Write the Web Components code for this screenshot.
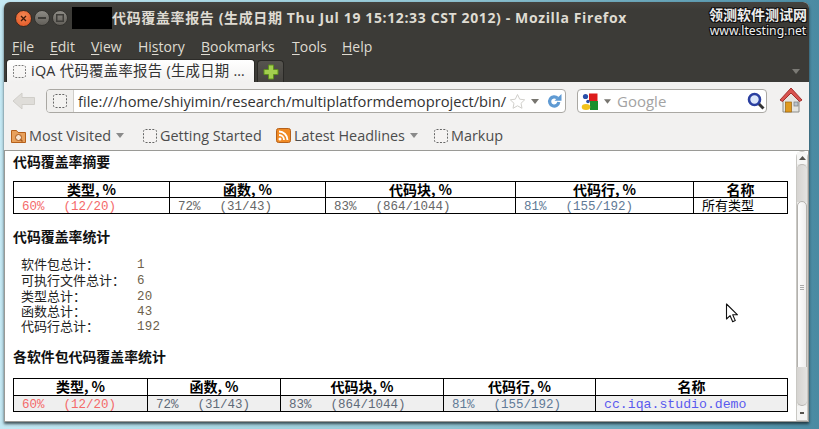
<!DOCTYPE html>
<html><head><meta charset="utf-8">
<style>html,body{margin:0;padding:0;width:819px;height:429px;overflow:hidden}</style>
</head><body>
<x-desktop>
  <x-window>
    <x-titlebar title="代码覆盖率报告 (生成日期 Thu Jul 19 15:12:33 CST 2012) - Mozilla Firefox"></x-titlebar>
    <x-menubar></x-menubar>
    <x-tabbar></x-tabbar>
    <x-navbar></x-navbar>
    <x-bookmarks></x-bookmarks>
    <x-viewport>
      <x-report></x-report>
      <x-scrollbar></x-scrollbar>
    </x-viewport>
  </x-window>
</x-desktop>
<script>
const UI = '"Open Sans","Noto Sans","Noto Sans CJK SC",sans-serif';
const CJK = '"Noto Sans CJK SC","Liberation Sans",sans-serif';
const dashed = (s=14)=>`<svg width="${s}" height="${s}" viewBox="0 0 14 14" style="display:block;flex:none"><rect x=".5" y=".5" width="13" height="13" rx="2" fill="#f6f5f4" fill-opacity=".6" stroke="#666" stroke-dasharray="2 1.4"/></svg>`;
const tri = (c='#8a8a8a',w=8,h=5)=>`<svg width="${w}" height="${h}" viewBox="0 0 8 5" style="display:block;flex:none"><path d="M0 0h8L4 5z" fill="${c}"/></svg>`;
function def(name, css, html){
  customElements.define(name, class extends HTMLElement{
    constructor(){super();const r=this.attachShadow({mode:'open'});
      r.innerHTML=`<style>${css}</style>`+(typeof html==='function'?html(this):html);}
    connectedCallback(){ if(typeof html==='function'){const r=this.shadowRoot;r.innerHTML=`<style>${css}</style>`+html(this);} }
  });
}
def('x-desktop',`:host{display:block;position:relative;width:819px;height:429px;overflow:hidden;box-sizing:border-box;padding:2px 10px 0 4px;
  background:linear-gradient(90deg,#c4e8f3 0,#b4dfea 15%,#8fc3d1 55%,#5a9ab0 90%,#4a8aa2 100%)}
  .wm{position:absolute;left:706px;top:5px;width:104px;text-align:center;color:#eee;font-weight:700;
    text-shadow:-1px 0 #111,1px 0 #111,0 -1px #111,0 1px #111,-1px -1px #111,1px 1px #111,1px -1px #111,-1px 1px #111}
  .a{font:700 14px/18px ${CJK};white-space:nowrap}
  .b{font:400 12.2px/14px "Noto Sans",sans-serif;margin-top:1px;white-space:nowrap}
  svg.c{position:absolute;left:725px;top:303px}`,
 `<slot></slot><div class="wm"><div class="a">领测软件测试网</div><div class="b">www.ltesting.net</div></div>
 <svg class="c" width="14" height="20" viewBox="0 0 14 20"><path d="M1.5 1v15l3.6-3.3 2.6 6 2.6-1.1-2.600-5.800h4.800z" fill="#fff" stroke="#111" stroke-width="1.1" stroke-linejoin="round"/></svg>`);
def('x-window',`:host{display:flex;flex-direction:column;width:805px;height:420px;border-radius:6px 6px 0 0;overflow:hidden;background:#f2f1f0;
  box-shadow:0 2px 3px rgba(20,30,35,.75)}`,`<slot></slot>`);
def('x-titlebar',`:host{display:flex;align-items:center;height:32px;background:#3c3b37;box-sizing:border-box;padding-left:11px;
   background:linear-gradient(#45433f,#3c3b37 8px)}
   .btn{width:16px;height:16px;border-radius:50%;margin-right:2px;flex:none;display:flex;align-items:center;justify-content:center;box-sizing:border-box}
   .x{width:17px;height:17px;background:radial-gradient(circle at 50% 35%,#f58a55,#e0501f);color:#4a2010;border:1px solid #3a2a20}
   .g{background:linear-gradient(#8d8b85,#625f59);border:1px solid #34332f}
   .blk{width:40px;height:22px;background:#000;margin-left:2px;flex:none}
   .t{font:700 14px/20px "Open Sans","Noto Sans CJK SC",sans-serif;color:#dfdbd2;white-space:nowrap;letter-spacing:.63px}`,
 el=>`<div class="btn x"><svg width="7" height="7" viewBox="0 0 7 7"><path d="M1 1l5 5M6 1L1 6" stroke="#3f1a0a" stroke-width="1.3"/></svg></div>
   <div class="btn g"><svg width="8" height="2"><rect width="8" height="2" fill="#3e3d39"/></svg></div>
   <div class="btn g"><svg width="8" height="8"><rect x=".75" y=".75" width="6.5" height="6.5" fill="none" stroke="#3e3d39" stroke-width="1.5"/></svg></div>
   <div class="blk"></div><div class="t">${el.getAttribute('title')||''}</div>`);
const mi=(u,rest,w)=>`<span style="width:${w}px">${u?`<u>${u}</u>`:''}${rest}</span>`;
def('x-menubar',`:host{display:flex;align-items:center;height:25px;background:#3c3b37;padding-left:8px;box-sizing:border-box;
   font:400 14px/20px ${UI};color:#dfdbd2}
   span{display:block;white-space:nowrap;flex:none}u{text-underline-offset:2px}`,
 mi('F','ile',38)+mi('E','dit',41)+`<span style="width:47px"><u>V</u>iew</span><span style="width:63px">Hi<u>s</u>tory</span>`+mi('B','ookmarks',91)+mi('T','ools',50)+mi('H','elp',40));
def('x-tabbar',`:host{display:flex;height:23px;background:#3c3b37;padding-left:2px;box-sizing:border-box;position:relative;align-items:flex-end}
   .tab{width:249px;height:23px;box-sizing:border-box;background:linear-gradient(#fff,#f2f1f0);border-radius:4px 4px 0 0;display:flex;align-items:center;padding:0 0 0 6px;gap:5px;
     font:400 14.4px/18px ${UI};letter-spacing:.27px;color:#333;white-space:nowrap;overflow:hidden;flex:none;border:1px solid #2c2b28;border-bottom:0}
   .new{width:27px;height:22px;margin-left:2px;background:linear-gradient(#56544f,#45433f);border:1px solid #2a2926;border-bottom:0;border-radius:4px 4px 0 0;box-sizing:border-box;display:flex;align-items:center;justify-content:center;flex:none}
   .sp{flex:1}.dd{margin:0 9px 8px 0}`,
 `<div class="tab">${dashed(13)}<span>iQA 代码覆盖率报告 (生成日期 …</span></div>
  <div class="new"><svg width="16" height="16" viewBox="0 0 16 16"><path d="M5.5 1h5v4.500H15v5h-4.500V15h-5v-4.500H1v-5h4.500z" fill="#a3cf4e" stroke="#5f8f1e"/></svg></div>
  <div class="sp"></div><div class="dd">${tri('#7b7a75')}</div>`);
def('x-navbar',`:host{display:flex;align-items:center;height:39px;background:#f2f1f0;box-sizing:border-box;padding:0 0 1px 8px}
   .back{flex:none;width:34px}
   .url{width:520px;height:24px;box-sizing:border-box;border:1px solid #aaa8a3;border-radius:4px;background:#fff;display:flex;align-items:center;flex:none;overflow:hidden}
   .seg{width:27px;height:100%;background:#f0efed;border-right:1px solid #cfcdc9;display:flex;align-items:center;justify-content:center;flex:none;box-sizing:border-box}
   .u{font:400 14.7px/20px ${UI};color:#333;margin-left:4px;white-space:nowrap;width:432px;flex:none}
   .s{width:190px;height:24px;box-sizing:border-box;border:1px solid #aaa8a3;border-radius:4px;background:#fff;display:flex;align-items:center;margin-left:11px;padding-left:3px;flex:none}
   .g{font:400 15px/20px ${UI};color:#a3a3a3;margin-left:6px;flex:1}
   .home{margin:-3px 0 0 12px;flex:none}`,
 `<svg class="back" width="24" height="18" viewBox="0 0 34 18" preserveAspectRatio="xMinYMid"><path d="M1 9l9-8v4.500h12.500v7H10V17z" fill="#dfddd9" stroke="#d0cec9" stroke-linejoin="round"/></svg>
  <div class="url"><div class="seg">${dashed(14)}</div><div class="u">file:///home/shiyimin/research/multiplatformdemoproject/bin/</div>
   <svg width="17" height="17" viewBox="0 0 17 17" style="flex:none;margin-left:-1px"><path d="M8.500 1.500l2.200 4.700 5 .6-3.700 3.500 1 5-4.500-2.500-4.500 2.500 1-5L1.300 6.800l5-.6z" fill="#fff" stroke="#d0cfcb"/></svg>
   <span style="margin:0 7px 0 5px">${tri('#77756f')}</span>
   <svg width="16" height="16" viewBox="0 0 16 16" style="flex:none"><path d="M11.500 5.200A4.600 4.600 0 1 0 12.800 9" fill="none" stroke="#5f9ad3" stroke-width="3.200"/><path d="M8.500 7.800h7V1z" fill="#5f9ad3"/></svg>
  </div>
  <div class="s"><svg width="17" height="17" viewBox="0 0 17 17" style="flex:none">
    <circle cx="4.500" cy="3.500" r="2.600" fill="#2a4fa8"/><rect x="8" y=".5" width="8.500" height="7.500" fill="#dd1c1c"/><circle cx="7" cy="8.500" r="1.800" fill="#2a4fa8"/><rect x="9" y="8" width="8" height="9" fill="#1c8f2c"/><ellipse cx="5" cy="14" rx="4.300" ry="3" fill="#f2c21c"/></svg>
    <span style="margin-left:6px">${tri('#77756f',7,5)}</span><div class="g">Google</div>
    <svg width="18" height="18" viewBox="0 0 18 18" style="flex:none;margin-right:1px"><path d="M11 11l5.500 5.500" stroke="#333" stroke-width="3"/><circle cx="7.500" cy="7.500" r="5.500" fill="#dbe6fa" stroke="#2a3fa0" stroke-width="2.600"/></svg></div>
  <svg class="home" width="24" height="26" viewBox="0 0 24 26"><path d="M4 12v13h16V12L12 5z" fill="#e5e5e1" stroke="#8d8d88"/><path d="M1 13L12 1l11 12-2.500 1.500L12 6l-8.500 8.500z" fill="#d9534f" stroke="#a32f2b"/><rect x="6.500" y="15" width="6" height="10" fill="#e09a1e" stroke="#9a6510" stroke-width=".7"/><rect x="15" y="15" width="4" height="4" fill="#b9c4cf" stroke="#7d7d78" stroke-width=".7"/></svg>`);
const bm=(ic,t,w,dd)=>`<div class="b" style="width:${w}px">${ic}<span>${t}</span>${dd?tri('#8a8a8a'):''}</div>`;
def('x-bookmarks',`:host{display:flex;align-items:center;height:29px;background:#f2f1f0;box-sizing:border-box;padding-left:7px;font:400 14.4px/20px ${UI};color:#4c4c4c}
   .b{display:flex;align-items:center;gap:3px;flex:none;white-space:nowrap}
   .b svg:last-child:not(:first-child){margin-left:2px}`,
 bm(`<svg width="15" height="15" viewBox="0 0 15 15" style="flex:none"><path d="M.5 2.500h5l1.500 2h7.500v10H.5z" fill="#e8a15c" stroke="#b5601a"/><circle cx="7.500" cy="9.500" r="3" fill="#f7e4cf" stroke="#a5561a"/><path d="M9.500 11.500l2 2" stroke="#a5561a" stroke-width="1.400"/></svg>`,'Most Visited',132,1)
 +bm(dashed(14),'Getting Started',133)
 +bm(`<svg width="15" height="15" viewBox="0 0 15 15" style="flex:none"><rect x=".5" y=".5" width="14" height="14" rx="2" fill="#f08a24" stroke="#b5601a"/><circle cx="4" cy="11" r="1.500" fill="#fff"/><path d="M3 7a5 5 0 0 1 5 5M3 3.500A8.500 8.500 0 0 1 11.500 12" fill="none" stroke="#fff" stroke-width="1.800"/></svg>`,'Latest Headlines',158,1)
 +bm(dashed(14),'Markup',80));
def('x-viewport',`:host{display:flex;flex:1;min-height:0;background:#fff;border:1px solid #9a9a96;box-sizing:border-box;overflow:hidden}`,`<slot></slot>`);
def('x-scrollbar',`:host{display:flex;flex-direction:column;align-items:center;width:12px;margin-left:1px;box-sizing:border-box;background:#ecebe9;flex:none;position:relative;border:1px solid #c9c8c4;border-radius:6px 6px 0 0}
   .up{height:12px;display:flex;align-items:center;justify-content:center;background:#f6f6f5;width:100%;flex:none}
   .track{height:38px;width:100%;background:linear-gradient(90deg,#d5d3d0,#e4e3e1);border-radius:6px 6px 0 0;border-top:1px solid #bdbbb7;flex:none;box-sizing:border-box}
   .thumb{height:172px;width:100%;box-sizing:border-box;background:linear-gradient(90deg,#fdfdfd,#efeeed);border:1px solid #b3b1ad;border-radius:6px;flex:none;display:flex;flex-direction:column;gap:1px;align-items:center;justify-content:center;margin-top:-1px}
   .thumb i{display:block;width:4px;height:1px;background:#aaa}
   .t2{flex:1;width:100%;background:linear-gradient(90deg,#d5d3d0,#e4e3e1);border-radius:0 0 6px 6px;margin-top:-6px;border-bottom:1px solid #b3b1ad;box-sizing:border-box}
   .dn{height:14px;flex:none;display:flex;align-items:center;justify-content:center;width:100%;background:#f4f4f3}`,
 `<div class="up"><svg width="7" height="4"><path d="M0 4h7L3.500 0z" fill="#55534e"/></svg></div><div class="track"></div><div class="thumb"><i></i><i></i><i></i></div><div class="t2"></div><div class="dn"><svg width="4" height="2"><rect width="4" height="2" fill="#55534e"/></svg></div>`);
const mono='"Liberation Mono",monospace';
def('x-report',`:host{display:block;flex:1;min-width:0;box-sizing:border-box;padding:2px 0 0 8px}
   h3{margin:0;font:700 13.9px/16px ${CJK};color:#111}
   .stats{margin:12px 0 0 8px;display:grid;grid-template-columns:116px auto;grid-template-rows:16px 16px 15px 15px 15px;justify-content:start;font:400 13px/15px ${CJK};color:#222}
   .stats b{font:400 12.5px/12px ${mono};padding-top:3px;letter-spacing:.2px;color:#6d5f4a}`,
 `<h3>代码覆盖率摘要</h3>
  <x-cov-table style="margin-top:12px" cols="156,156,190,178,94" last="所有类型"></x-cov-table>
  <h3 style="margin-top:14px">代码覆盖率统计</h3>
  <div class="stats">
   <span>软件包总计：</span><b>1</b><span>可执行文件总计：</span><b>6</b><span>类型总计：</span><b>20</b><span>函数总计：</span><b>43</b><span>代码行总计：</span><b>192</b>
  </div>
  <h3 style="margin-top:15px">各软件包代码覆盖率统计</h3>
  <x-cov-table style="margin-top:14px" cols="134,133,163,152,192" link="1" shade="1" last="cc.iqa.studio.demo"></x-cov-table>`);
def('x-cov-table',`:host{display:block;width:775px;font:400 13px/15px ${CJK}}
   .g{display:grid;border:1px solid #000;box-sizing:border-box;width:775px;row-gap:1px;background:#000;column-gap:1px}
   .h{background:#fff;text-align:center;font:700 14px/15px ${CJK};color:#000;white-space:nowrap}
   .c{background:var(--bg);font:400 12.5px/14px ${mono};padding-top:2px;box-sizing:border-box;color:var(--fg);white-space:pre;padding-left:8px;overflow:hidden}
   .c span{margin-left:19px}
   .r{color:#f46a6a}.bl{color:#5f7a96}.nm{font:400 13px/14px ${CJK};color:#000;padding-left:8px;background:var(--bg)}
   .lk{font:400 13.2px/14px ${mono};padding-top:2px;box-sizing:border-box;color:#5a5aee;padding-left:8px;background:var(--bg)}`,
 el=>{const cols=el.getAttribute('cols').split(',');const cs=cols.map((w,i)=>i==cols.length-1?'1fr':(w-1)+'px').join(' ');
  const sh=el.getAttribute('shade');const bg=sh?'#efefef':'#fff';const fg=sh?'#5f6a78':'#666';
  const rows=sh?'16px 15px':'15px 15px';const ht=sh?34:33;
  return `<div class="g" style="grid-template-columns:${cs};grid-template-rows:${rows};height:${ht}px;--bg:${bg};--fg:${fg}">
  <div class="h">类型, %</div><div class="h">函数, %</div><div class="h">代码块, %</div><div class="h">代码行, %</div><div class="h">名称</div>
  <div class="c r">60%<span>(12/20)</span></div><div class="c">72%<span>(31/43)</span></div><div class="c">83%<span>(864/1044)</span></div><div class="c bl">81%<span>(155/192)</span></div>
  <div class="${el.getAttribute('link')?'lk':'nm'}">${el.getAttribute('last')}</div></div>`;});
</script>
</body></html>
